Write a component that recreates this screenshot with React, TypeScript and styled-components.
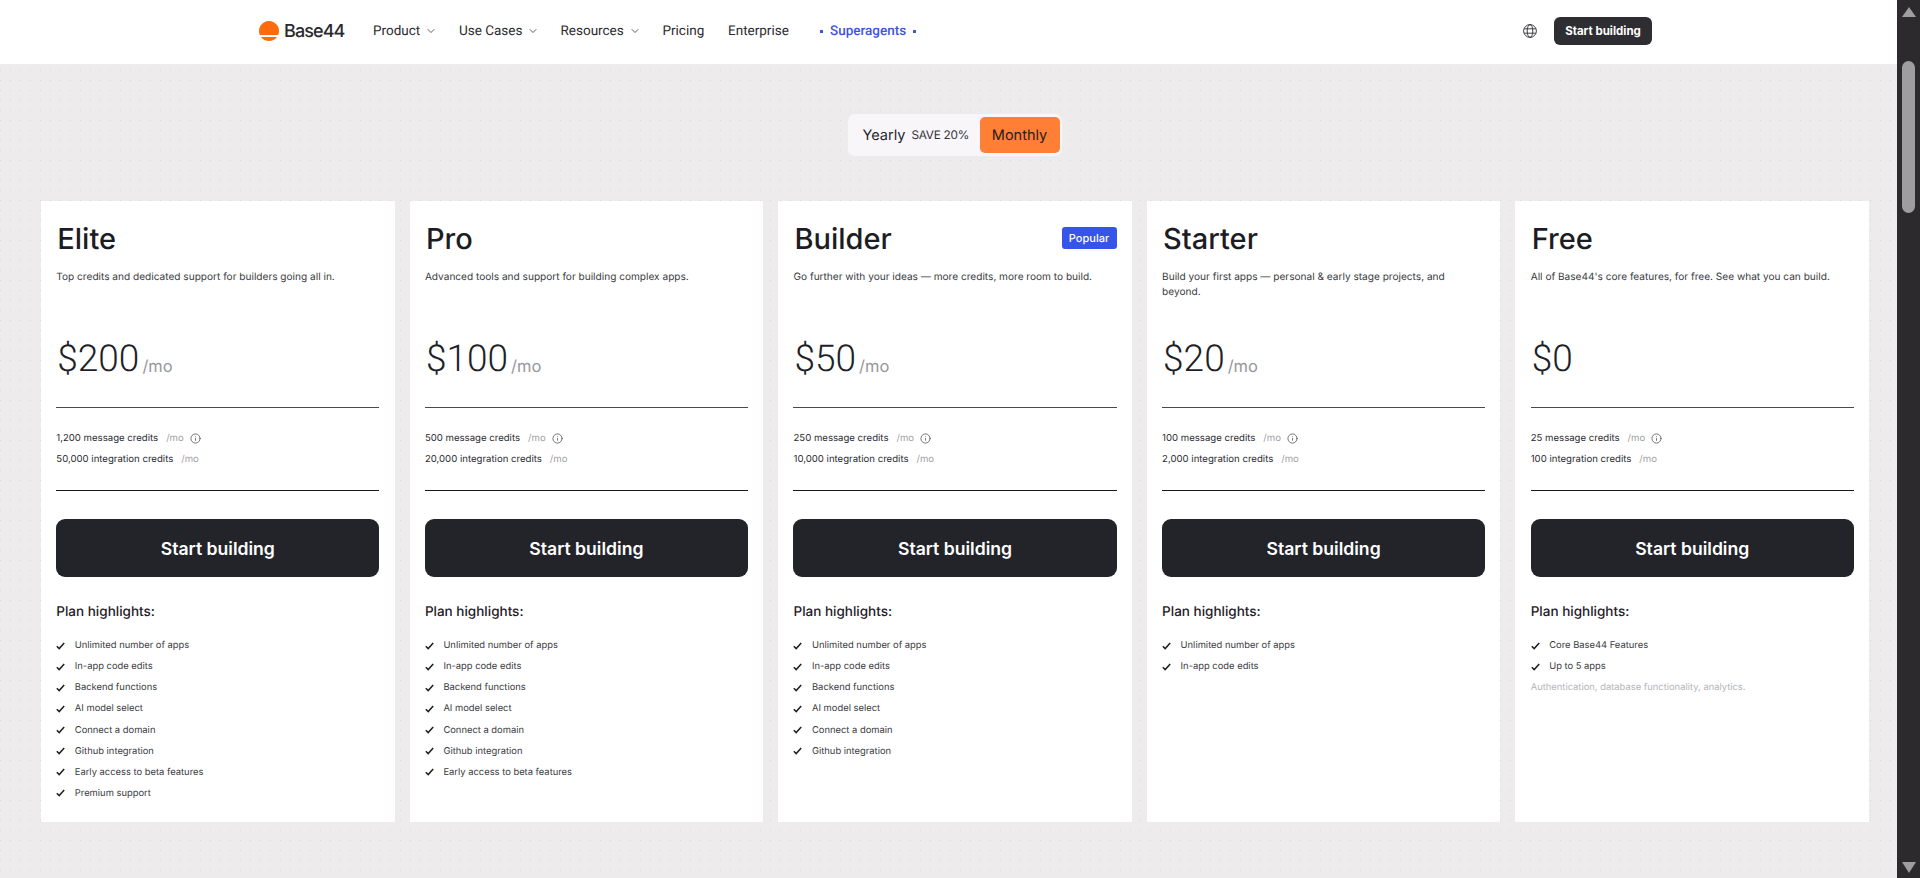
import styled, { createGlobalStyle } from 'styled-components';
import { ChevronDown, Info } from 'lucide-react';

interface Plan {
  name: string;
  description: string;
  price: string;
  perMonth: boolean;
  messages: string;
  integrations: string;
  popular?: boolean;
  highlights: string[];
  note?: string;
}

const allHighlights = [
  'Unlimited number of apps',
  'In-app code edits',
  'Backend functions',
  'AI model select',
  'Connect a domain',
  'Github integration',
  'Early access to beta features',
  'Premium support',
];

const plans: Plan[] = [
  {
    name: 'Elite',
    description: 'Top credits and dedicated support for builders going all in.',
    price: '$200',
    perMonth: true,
    messages: '1,200',
    integrations: '50,000',
    highlights: allHighlights,
  },
  {
    name: 'Pro',
    description: 'Advanced tools and support for building complex apps.',
    price: '$100',
    perMonth: true,
    messages: '500',
    integrations: '20,000',
    highlights: allHighlights.slice(0, 7),
  },
  {
    name: 'Builder',
    description: 'Go further with your ideas — more credits, more room to build.',
    price: '$50',
    perMonth: true,
    messages: '250',
    integrations: '10,000',
    popular: true,
    highlights: allHighlights.slice(0, 6),
  },
  {
    name: 'Starter',
    description: 'Build your first apps — personal & early stage projects, and beyond.',
    price: '$20',
    perMonth: true,
    messages: '100',
    integrations: '2,000',
    highlights: allHighlights.slice(0, 2),
  },
  {
    name: 'Free',
    description: "All of Base44's core features, for free. See what you can build.",
    price: '$0',
    perMonth: false,
    messages: '25',
    integrations: '100',
    highlights: ['Core Base44 Features', 'Up to 5 apps'],
    note: 'Authentication, database functionality, analytics.',
  },
];

const GlobalStyle = createGlobalStyle`
  html, body {
    margin: 0;
    height: 100%;
    overflow: hidden;
    font-family: Inter, "Liberation Sans", sans-serif;
    text-rendering: geometricPrecision;
    color: #1e1f25;
  }
  * { box-sizing: border-box; }
`;

const Shell = styled.div`
  display: flex;
  height: 878px;
  overflow: hidden;
`;

const Page = styled.div`
  flex: 1;
  min-width: 0;
  background-color: #eeebec;
  background-image: radial-gradient(circle at 0.5px 0.5px, #d9d6d7 0.7px, transparent 0.7px);
  background-size: 10px 10px;
`;

const Header = styled.header`
  height: 64px;
  background: #fff;
  display: flex;
  align-items: center;
  padding: 0 245px 2px 259px;
`;

const Logo = styled.div`
  display: flex;
  flex: none;
  align-items: center;
  gap: 5px;
  width: 114px;
  font-size: 18px;
  font-weight: 500;
  letter-spacing: -0.9px;
  color: #2a2a2e;
`;

const Nav = styled.nav`
  display: flex;
  align-items: center;
  font-family: Roboto, sans-serif;
  font-size: 13.5px;
  color: #2b2b30;
`;

const NavItem = styled.a<{ $width: number }>`
  display: flex;
  flex: none;
  align-items: center;
  gap: 5px;
  width: ${(p) => p.$width}px;
  white-space: nowrap;
`;

const SuperAgents = styled.a`
  display: flex;
  align-items: center;
  gap: 7px;
  color: #3f55d8;
  font-weight: 500;
  white-space: nowrap;
  &::before,
  &::after {
    content: '';
    width: 3px;
    height: 3px;
    background: #3f55d8;
  }
`;

const HeaderRight = styled.div`
  margin-left: auto;
  display: flex;
  align-items: center;
  gap: 17px;
`;

const HeaderButton = styled.button`
  width: 98px;
  height: 28px;
  border: 0;
  border-radius: 6px;
  background: #2e2d31;
  color: #fff;
  font-family: inherit;
  font-size: 11.5px;
  font-weight: 700;
  padding: 0;
`;

const Content = styled.main`
  padding: 50px 28px 0 41px;
`;

const ToggleRow = styled.div`
  display: flex;
  justify-content: center;
  margin-bottom: 45px;
`;

const Toggle = styled.div`
  width: 214px;
  height: 42px;
  margin-right: 1px;
  display: flex;
  align-items: center;
  background: #f8f6f8;
  border-radius: 7px;
  padding: 0 2px 0 15px;
`;

const Yearly = styled.span`
  font-size: 14.5px;
  color: #26262c;
`;

const Save = styled.span`
  font-size: 11.8px;
  letter-spacing: -0.25px;
  color: #33333a;
  margin-left: 6px;
`;

const Monthly = styled.span`
  margin-left: auto;
  width: 80px;
  height: 36px;
  display: flex;
  align-items: center;
  justify-content: center;
  background: #ff7f37;
  border-radius: 5px;
  font-size: 14.5px;
  color: #2a1d18;
`;

const Cards = styled.div`
  display: grid;
  grid-template-columns: repeat(5, 1fr);
  gap: 15px;
`;

const Card = styled.section`
  height: 621px;
  background: #fff;
  padding: 19px 15.3px 0;
`;

const TitleRow = styled.div`
  display: flex;
  align-items: center;
  justify-content: space-between;
  height: 36px;
`;

const PlanName = styled.h2`
  margin: 0 0 0 1px;
  font-size: 29px;
  font-weight: 500;
  color: #1c1d24;
`;

const Badge = styled.span`
  width: 55px;
  height: 22px;
  display: flex;
  align-items: center;
  justify-content: center;
  background: #3654e8;
  border-radius: 3px;
  color: #fff;
  font-size: 11px;
  font-weight: 500;
`;

const Description = styled.p`
  margin: 14px 0 0;
  height: 65px;
  font-size: 10.1px;
  line-height: 15px;
  color: #3a3b42;
`;

const PriceRow = styled.div`
  display: flex;
  align-items: baseline;
  height: 47px;
`;

const Price = styled.span`
  margin-left: 1px;
  font-family: Roboto, sans-serif;
  font-size: 37px;
  font-weight: 350;
  line-height: 49px;
  color: #1e1f27;
`;

const Per = styled.span`
  margin-left: 3px;
  font-size: 16.5px;
  color: #97979d;
  transform: translateY(1px);
`;

const Rule = styled.hr<{ $top: number; $color: string }>`
  margin: ${(p) => p.$top}px 0 0;
  border: 0;
  border-top: 1px solid ${(p) => p.$color};
`;

const Credits = styled.div`
  margin-top: 23px;
  display: flex;
  flex-direction: column;
  gap: 6px;
`;

const CreditLine = styled.div`
  display: flex;
  align-items: center;
  height: 15px;
  font-size: 9.6px;
  color: #2c2d33;
  svg { margin-left: 6px; color: #3a3a40; }
`;

const CreditPer = styled.span`
  margin-left: 8px;
  color: #a0a0a5;
`;

const BuildButton = styled.button`
  display: block;
  width: 100%;
  height: 58px;
  margin-top: 28px;
  border: 0;
  border-radius: 9px;
  background: #232429;
  color: #fff;
  font-family: inherit;
  font-size: 17.6px;
  font-weight: 600;
`;

const HighlightsTitle = styled.h3`
  margin: 25px 0 0;
  font-size: 13.5px;
  line-height: 20px;
  font-weight: 500;
  color: #1f2028;
`;

const List = styled.ul`
  list-style: none;
  margin: 16px 0 0;
  padding: 0;
  display: flex;
  flex-direction: column;
  gap: 6.15px;
`;

const Item = styled.li`
  display: flex;
  align-items: center;
  gap: 9.5px;
  height: 15px;
  font-size: 9.4px;
  color: #3a3b42;
`;

const Note = styled.p`
  margin: 6px 0 0;
  font-size: 9.4px;
  line-height: 15px;
  color: #b4b4b8;
`;

const Scrollbar = styled.aside`
  width: 23px;
  flex: none;
  background: #2c2a2c;
  display: flex;
  flex-direction: column;
  align-items: center;
`;

const Arrow = styled.div<{ $down?: boolean }>`
  width: 0;
  height: 0;
  border-left: 7.5px solid transparent;
  border-right: 7.5px solid transparent;
  margin: ${(p) => (p.$down ? 'auto 0 5px' : '7px 0 0')};
  ${(p) => (p.$down ? 'border-top: 11px solid #9e9d9f;' : 'border-bottom: 10px solid #9e9d9f;')}
`;

const Thumb = styled.div`
  width: 13px;
  height: 152px;
  margin-top: 44px;
  border-radius: 7px;
  background: #9e9d9f;
`;

const LogoMark = () => (
  <svg width="20" height="20" viewBox="0 0 20 20" fill="#ff6b0a">
    <path d="M0.83 14A10 10 0 1 1 19.17 14Z" />
    <path d="M2 16H18A10 10 0 0 1 2 16Z" />
  </svg>
);

const GlobeIcon = () => (
  <svg width="14" height="14" viewBox="0 0 14 14" fill="none" stroke="#2b2b30" strokeWidth="0.9">
    <circle cx="7" cy="7" r="6.4" />
    <ellipse cx="7" cy="7" rx="2.8" ry="6.4" />
    <path d="M1.2 4.8h11.6M1.2 9.2h11.6" />
  </svg>
);

const CheckIcon = () => (
  <svg width="9" height="8" viewBox="0 0 9 8" fill="none" stroke="#1e1f25" strokeWidth="1.5">
    <path d="M0.8 4.2 3.2 6.6 8.2 1" />
  </svg>
);

const PlanCard = ({ plan }: { plan: Plan }) => (
  <Card>
    <TitleRow>
      <PlanName>{plan.name}</PlanName>
      {plan.popular && <Badge>Popular</Badge>}
    </TitleRow>
    <Description>{plan.description}</Description>
    <PriceRow>
      <Price>{plan.price}</Price>
      {plan.perMonth && <Per>/mo</Per>}
    </PriceRow>
    <Rule $top={25} $color="#4a4a4e" />
    <Credits>
      <CreditLine>
        {plan.messages} message credits <CreditPer>/mo</CreditPer>
        <Info size={11} strokeWidth={1.5} />
      </CreditLine>
      <CreditLine>
        {plan.integrations} integration credits <CreditPer>/mo</CreditPer>
      </CreditLine>
    </Credits>
    <Rule $top={23} $color="#1a1a1e" />
    <BuildButton>Start building</BuildButton>
    <HighlightsTitle>Plan highlights:</HighlightsTitle>
    <List>
      {plan.highlights.map((h) => (
        <Item key={h}>
          <CheckIcon />
          {h}
        </Item>
      ))}
    </List>
    {plan.note && <Note>{plan.note}</Note>}
  </Card>
);

export default function App() {
  return (
    <>
      <GlobalStyle />
      <Shell>
        <Page>
          <Header>
            <Logo>
              <LogoMark />
              Base44
            </Logo>
            <Nav>
              <NavItem $width={86}>Product <ChevronDown size={12} strokeWidth={1.5} /></NavItem>
              <NavItem $width={101.5}>Use Cases <ChevronDown size={12} strokeWidth={1.5} /></NavItem>
              <NavItem $width={102}>Resources <ChevronDown size={12} strokeWidth={1.5} /></NavItem>
              <NavItem $width={65.5}>Pricing</NavItem>
              <NavItem $width={92}>Enterprise</NavItem>
              <SuperAgents>Superagents</SuperAgents>
            </Nav>
            <HeaderRight>
              <GlobeIcon />
              <HeaderButton>Start building</HeaderButton>
            </HeaderRight>
          </Header>
          <Content>
            <ToggleRow>
              <Toggle>
                <Yearly>Yearly</Yearly>
                <Save>SAVE 20%</Save>
                <Monthly>Monthly</Monthly>
              </Toggle>
            </ToggleRow>
            <Cards>
              {plans.map((plan) => (
                <PlanCard key={plan.name} plan={plan} />
              ))}
            </Cards>
          </Content>
        </Page>
        <Scrollbar>
          <Arrow />
          <Thumb />
          <Arrow $down />
        </Scrollbar>
      </Shell>
    </>
  );
}
